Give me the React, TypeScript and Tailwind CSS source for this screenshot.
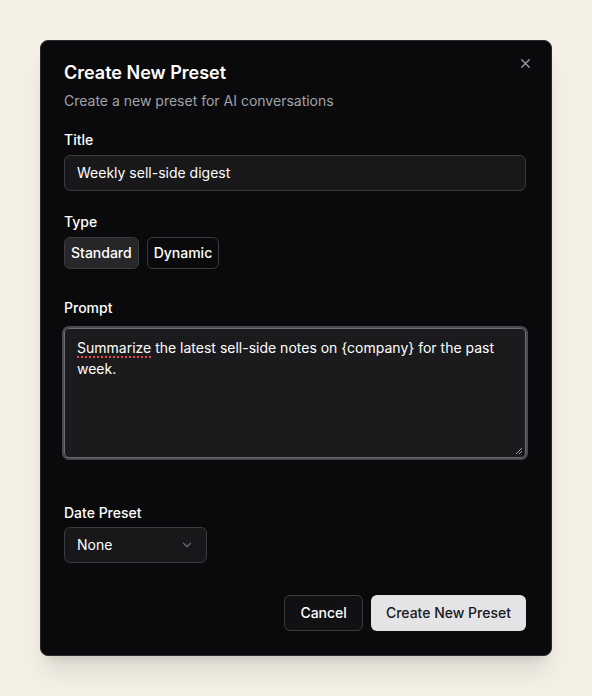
import { X, ChevronDown } from "lucide-react";

function FieldLabel({ children }: { children: string }) {
  return <div className="text-sm font-medium leading-5 text-white">{children}</div>;
}

export default function App() {
  return (
    <div
      className="min-h-[696px] w-full bg-[#f4f0e6] p-10"
      style={{ fontFamily: "Inter, 'Noto Sans', sans-serif" }}
    >
      <div className="relative flex w-[512px] flex-col rounded-lg border border-[#2a2a2e] bg-[#0a0a0c] pb-6 pl-[23px] pr-[25px] pt-[22px] shadow-xl">
        <button className="absolute right-[18px] top-[15px] text-[#a1a1aa]">
          <X size={15} strokeWidth={2} />
        </button>

        <div className="flex flex-col gap-2">
          <h2 className="text-lg font-semibold leading-5 text-white">Create New Preset</h2>
          <p className="text-sm leading-5 text-[#a1a1aa]">Create a new preset for AI conversations</p>
        </div>

        <div className="mt-[19px] flex flex-col gap-[5px]">
          <FieldLabel>Title</FieldLabel>
          <div className="flex h-9 items-center rounded-md border border-[#3a3a3f] bg-[#18181b] px-3 text-sm text-white">
            Weekly sell-side digest
          </div>
        </div>

        <div className="mt-[21px] flex flex-col gap-[5px]">
          <FieldLabel>Type</FieldLabel>
          <div className="flex gap-2">
            <button className="h-8 rounded-md border border-[#3a3a3f] bg-[#27272a] px-[6px] text-sm font-medium text-white">
              Standard
            </button>
            <button className="h-8 rounded-md border border-[#3a3a3f] bg-[#0a0a0c] px-[6px] text-sm font-medium text-white">
              Dynamic
            </button>
          </div>
        </div>

        <div className="mt-[29px] flex flex-col gap-[8px]">
          <FieldLabel>Prompt</FieldLabel>
          <div className="-mx-[2px] rounded-[7px] border-2 border-[#4a4a50] bg-[#1b1b1e]">
            <div className="relative h-[130px] rounded-[5px] border border-[#6b6b72] px-3 py-[8px] text-sm leading-[21px] text-white">
              <span className="underline decoration-[#e5484d] decoration-dotted decoration-2 underline-offset-[3px]">
                Summarize
              </span>{" "}
              the latest sell-side notes on {"{company}"} for the past week.
              <svg
                className="absolute bottom-[2px] right-[2px]"
                width="8"
                height="8"
                viewBox="0 0 8 8"
              >
                <path d="M7 1 L1 7 M7 4 L4 7" stroke="#a1a1aa" strokeWidth="1" />
              </svg>
            </div>
          </div>
        </div>

        <div className="mt-[43px] flex flex-col gap-1">
          <FieldLabel>Date Preset</FieldLabel>
          <div className="flex h-9 w-[143px] items-center justify-between rounded-md border border-[#3a3a3f] bg-[#18181b] px-3 text-sm text-white">
            <span>None</span>
            <ChevronDown size={14} className="text-[#6b6b72]" />
          </div>
        </div>

        <div className="mt-8 flex justify-end gap-2">
          <button className="h-9 rounded-md border border-[#3a3a3f] bg-[#111113] px-[15px] text-sm font-medium text-white">
            Cancel
          </button>
          <button className="h-9 rounded-md bg-[#e4e4e7] px-[15px] text-sm font-medium text-[#18181b]">
            Create New Preset
          </button>
        </div>
      </div>
    </div>
  );
}
